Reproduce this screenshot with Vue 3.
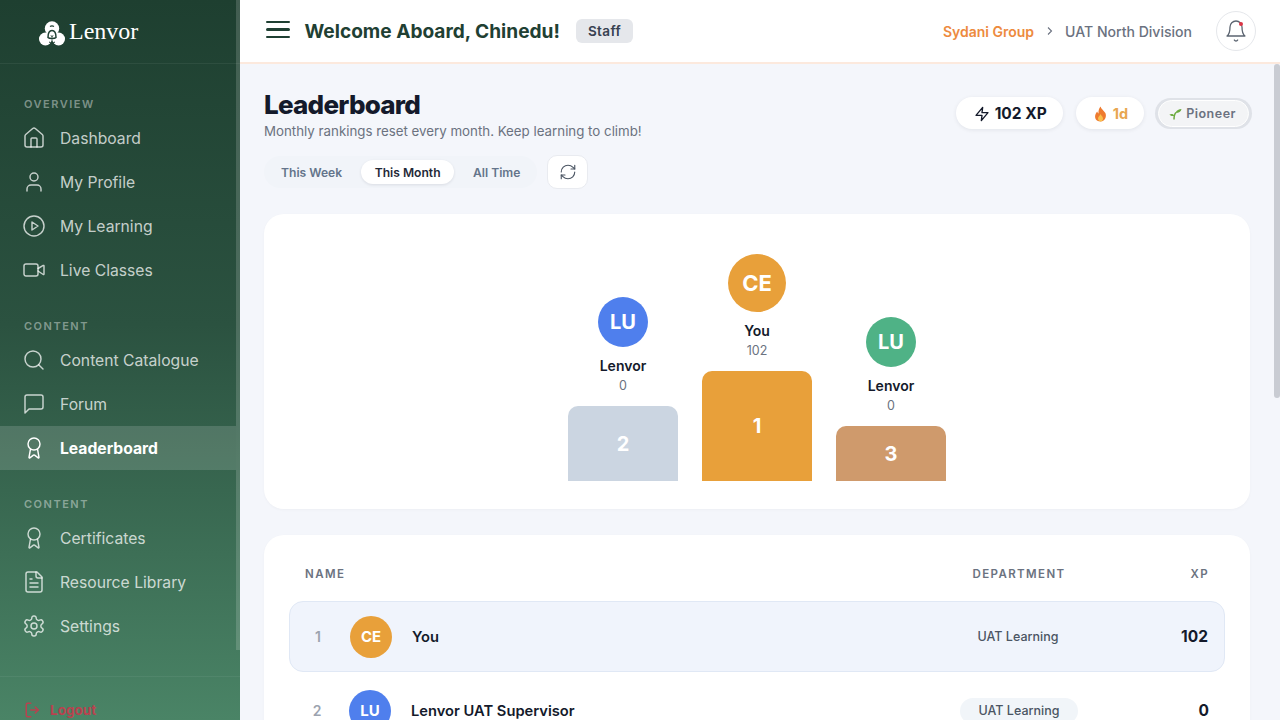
<template>
  <div class="app">
    <aside class="sidebar">
      <div class="brand">
        <svg class="brand-mark" width="26" height="25" viewBox="0 0 26 25">
          <circle cx="13" cy="7.5" r="7.2" fill="#fff" />
          <circle cx="6.4" cy="18" r="6.4" fill="#fff" />
          <circle cx="19.6" cy="18" r="6.4" fill="#fff" />
          <path d="M9 16.500c0-4 1.600-7 4-7s4 3 4 7c-1.200 1.400-6.800 1.400-8 0z" fill="none" stroke="#1f4033" stroke-width="1.500" />
          <path d="M11 5.500c1.200-.8 2.800-.8 4 0" fill="none" stroke="#1f4033" stroke-width="1.200" />
          <path d="M10 21c2 1.200 4 1.200 6 0" fill="none" stroke="#1f4033" stroke-width="1" />
        </svg>
        <span class="brand-name">Lenvor</span>
      </div>

      <nav class="nav">
        <div v-for="section in sections" :key="section.id" class="nav-section">
          <div class="nav-label">{{ section.label }}</div>
          <a
            v-for="item in section.items"
            :key="item.name"
            class="nav-item"
            :class="{ active: item.name === 'Leaderboard' }"
          >
            <svg class="nav-icon" viewBox="0 0 24 24">
              <path v-for="d in icons[item.icon]" :key="d" :d="d" />
            </svg>
            <span>{{ item.name }}</span>
          </a>
        </div>
      </nav>

      <div class="side-foot">
        <a class="logout">
          <svg class="logout-icon" viewBox="0 0 24 24">
            <path d="M9 21H5a2 2 0 0 1-2-2V5a2 2 0 0 1 2-2h4" />
            <path d="M15 8l4 4-4 4" />
            <path d="M19 12H9" />
          </svg>
          <span>Logout</span>
        </a>
      </div>
      <div class="side-thumb"></div>
    </aside>

    <div class="shell">
      <header class="topbar">
        <div class="top-left">
          <button class="burger"><span></span><span></span><span></span></button>
          <h1 class="welcome">Welcome Aboard, Chinedu!</h1>
          <span class="role">Staff</span>
        </div>
        <div class="top-right">
          <span class="org">Sydani Group</span>
          <svg class="crumb-sep" width="10" height="10" viewBox="0 0 10 10"><path d="M3 1.500 6.500 5 3 8.500" /></svg>
          <span class="division">UAT North Division</span>
          <button class="bell">
            <svg width="24" height="24" viewBox="0 0 24 24">
              <path d="M6 8a6 6 0 0 1 12 0c0 7 3 9 3 9H3s3-2 3-9" />
              <path d="M10.300 21a1.940 1.940 0 0 0 3.400 0" />
            </svg>
            <i class="bell-dot"></i>
          </button>
        </div>
      </header>

      <main class="page">
        <div class="page-head">
          <div>
            <h2 class="page-title">Leaderboard</h2>
            <p class="page-sub">Monthly rankings reset every month. Keep learning to climb!</p>
          </div>
          <div class="chips">
            <div class="chip chip-xp">
              <svg width="16" height="16" viewBox="0 0 24 24"><path d="M13 2 3 14h9l-1 8 10-12h-9l1-8z" /></svg>
              102 XP
            </div>
            <div class="chip chip-streak">
              <svg width="15" height="16" viewBox="0 0 16 18">
                <path d="M8 .5c.6 3 4 4.600 5.500 7.500 1.500 3.200.2 9.500-5.500 9.500S1 12.500 2.500 9c.6-1.300 1.300-2 1.800-2.800.3 1.200.8 1.900 1.500 2.300C5.400 5.500 6.300 2.500 8 .5z" fill="#ee7b2f" />
                <path d="M8 9c.4 1.500 2.800 2.600 2.800 5 0 2-1.300 3.300-2.800 3.300S5.200 16 5.200 14.200C5.200 12 7.400 11 8 9z" fill="#f9c04d" />
              </svg>
              1d
            </div>
            <div class="chip-ring">
              <div class="chip-level">
                <svg width="13" height="12" viewBox="0 0 13 12">
                  <path d="M5 11.500C5 8 5.500 6 7 4.500" fill="none" stroke="#6cab3f" stroke-width="1.500" />
                  <path d="M6.500 5C7.500 2 10 1 12.500 1 12 3.500 10 5 6.500 5z" fill="#6cab3f" />
                  <path d="M5.500 7.500C4.500 6 2.500 5.500.5 6.500 1.500 8 3.500 8.500 5.500 7.500z" fill="#6cab3f" />
                </svg>
                Pioneer
              </div>
            </div>
          </div>
        </div>

        <div class="filters">
          <div class="tabs">
            <button v-for="t in tabs" :key="t" class="tab" :class="{ on: t === 'This Month' }">{{ t }}</button>
          </div>
          <button class="refresh">
            <svg width="18" height="18" viewBox="0 0 24 24">
              <path d="M3 12a9 9 0 0 1 9-9 9.750 9.750 0 0 1 6.740 2.740L21 8" />
              <path d="M21 3v5h-5" />
              <path d="M21 12a9 9 0 0 1-9 9 9.750 9.750 0 0 1-6.740-2.740L3 16" />
              <path d="M8 16H3v5" />
            </svg>
          </button>
        </div>

        <section class="podium-card">
          <div class="podium">
            <div v-for="p in podium" :key="p.rank" class="podium-col">
              <div class="avatar" :class="p.big ? 'big' : ''" :style="{ background: p.color }">{{ p.initials }}</div>
              <div class="podium-name">{{ p.name }}</div>
              <div class="podium-xp">{{ p.xp }}</div>
              <div class="podium-bar" :style="{ height: p.height + 'px', background: p.barColor }">{{ p.rank }}</div>
            </div>
          </div>
        </section>

        <section class="table-card">
          <div class="table-head">
            <span class="th-name">Name</span>
            <span class="th-dept">Department</span>
            <span class="th-xp">XP</span>
          </div>
          <div v-for="row in rows" :key="row.rank" class="row" :class="{ me: row.me }">
            <span class="row-rank">{{ row.rank }}</span>
            <span class="row-avatar" :style="{ background: row.color }">{{ row.initials }}</span>
            <span class="row-name">{{ row.name }}</span>
            <span class="row-dept"><span class="dept-pill">{{ row.dept }}</span></span>
            <span class="row-xp">{{ row.xp }}</span>
          </div>
        </section>
      </main>
      <div class="page-thumb"></div>
    </div>
  </div>
</template>

<script setup>
const icons = {
  home: [
    'M15 21v-8a1 1 0 0 0-1-1h-4a1 1 0 0 0-1 1v8',
    'M3 10a2 2 0 0 1 .709-1.528l7-5.999a2 2 0 0 1 2.582 0l7 5.999A2 2 0 0 1 21 10v9a2 2 0 0 1-2 2H5a2 2 0 0 1-2-2z',
  ],
  user: [
    'M19 21v-2a4 4 0 0 0-4-4H9a4 4 0 0 0-4 4v2',
    'M16 7a4 4 0 1 1-8 0a4 4 0 1 1 8 0',
  ],
  play: [
    'M22 12a10 10 0 1 1-20 0a10 10 0 1 1 20 0',
    'M10 8l6 4-6 4z',
  ],
  video: [
    'M16 13l5.223 3.482a.5.5 0 0 0 .777-.416V7.870a.5.5 0 0 0-.752-.432L16 10.500',
    'M4 6h10a2 2 0 0 1 2 2v8a2 2 0 0 1-2 2H4a2 2 0 0 1-2-2V8a2 2 0 0 1 2-2z',
  ],
  search: [
    'm21 21-4.340-4.340',
    'M19 11a8 8 0 1 1-16 0a8 8 0 1 1 16 0',
  ],
  chat: ['M21 15a2 2 0 0 1-2 2H7l-4 4V5a2 2 0 0 1 2-2h14a2 2 0 0 1 2 2z'],
  award: [
    'm15.477 12.890 1.515 8.526a.5.5 0 0 1-.810.470l-3.580-2.687a1 1 0 0 0-1.197 0l-3.586 2.686a.5.5 0 0 1-.810-.469l1.514-8.526',
    'M18 8a6 6 0 1 1-12 0a6 6 0 1 1 12 0',
  ],
  file: [
    'M15 2H6a2 2 0 0 0-2 2v16a2 2 0 0 0 2 2h12a2 2 0 0 0 2-2V7Z',
    'M14 2v4a2 2 0 0 0 2 2h4',
    'M10 9H8',
    'M16 13H8',
    'M16 17H8',
  ],
  gear: [
    'M12.220 2h-.440a2 2 0 0 0-2 2v.180a2 2 0 0 1-1 1.730l-.430.250a2 2 0 0 1-2 0l-.150-.080a2 2 0 0 0-2.730.730l-.220.380a2 2 0 0 0 .730 2.730l.150.100a2 2 0 0 1 1 1.720v.510a2 2 0 0 1-1 1.740l-.150.090a2 2 0 0 0-.730 2.730l.220.380a2 2 0 0 0 2.730.730l.150-.080a2 2 0 0 1 2 0l.430.250a2 2 0 0 1 1 1.730V20a2 2 0 0 0 2 2h.440a2 2 0 0 0 2-2v-.180a2 2 0 0 1 1-1.730l.430-.250a2 2 0 0 1 2 0l.150.080a2 2 0 0 0 2.730-.730l.220-.390a2 2 0 0 0-.730-2.730l-.150-.080a2 2 0 0 1-1-1.740v-.500a2 2 0 0 1 1-1.740l.150-.090a2 2 0 0 0 .730-2.730l-.220-.380a2 2 0 0 0-2.730-.730l-.150.080a2 2 0 0 1-2 0l-.430-.250a2 2 0 0 1-1-1.730V4a2 2 0 0 0-2-2z',
    'M15 12a3 3 0 1 1-6 0a3 3 0 1 1 6 0',
  ],
}

const sections = [
  {
    id: 'overview',
    label: 'Overview',
    items: [
      { name: 'Dashboard', icon: 'home' },
      { name: 'My Profile', icon: 'user' },
      { name: 'My Learning', icon: 'play' },
      { name: 'Live Classes', icon: 'video' },
    ],
  },
  {
    id: 'content',
    label: 'Content',
    items: [
      { name: 'Content Catalogue', icon: 'search' },
      { name: 'Forum', icon: 'chat' },
      { name: 'Leaderboard', icon: 'award' },
    ],
  },
  {
    id: 'content2',
    label: 'Content',
    items: [
      { name: 'Certificates', icon: 'award' },
      { name: 'Resource Library', icon: 'file' },
      { name: 'Settings', icon: 'gear' },
    ],
  },
]

const tabs = ['This Week', 'This Month', 'All Time']

const podium = [
  { rank: 2, initials: 'LU', name: 'Lenvor', xp: 0, color: '#4f7fed', barColor: '#cbd5e1', height: 75 },
  { rank: 1, initials: 'CE', name: 'You', xp: 102, color: '#e8a03a', barColor: '#e8a03a', height: 110, big: true },
  { rank: 3, initials: 'LU', name: 'Lenvor', xp: 0, color: '#4fb286', barColor: '#cf9a6c', height: 55 },
]

const rows = [
  { rank: 1, initials: 'CE', name: 'You', dept: 'UAT Learning', xp: 102, color: '#e8a03a', me: true },
  { rank: 2, initials: 'LU', name: 'Lenvor UAT Supervisor', dept: 'UAT Learning', xp: 0, color: '#4f7fed' },
]
</script>

<style>
html,
body {
  margin: 0;
  overflow: hidden;
}
</style>

<style scoped>
.app {
  display: flex;
  height: 720px;
  font-family: Inter, "Noto Sans", sans-serif;
  color: #111827;
  background: #f4f6fb;
}

button {
  font-family: inherit;
  border: none;
  background: none;
  padding: 0;
}

/* Sidebar */
.sidebar {
  position: relative;
  width: 240px;
  flex-shrink: 0;
  height: 720px;
  box-sizing: border-box;
  overflow: hidden;
  background: linear-gradient(180deg, #1e3f30 0%, #2b5240 45%, #4a8466 100%);
}

.side-thumb {
  position: absolute;
  top: 0;
  right: 0;
  width: 4px;
  height: 650px;
  background: rgba(255, 255, 255, 0.16);
}

.brand {
  height: 63px;
  display: flex;
  align-items: center;
  padding-left: 39px;
  gap: 4px;
  border-bottom: 1px solid rgba(255, 255, 255, 0.06);
}

.brand-mark {
  margin-top: 3px;
}

.brand-name {
  font-family: "Liberation Serif", serif;
  font-size: 24px;
  color: #fff;
}

.nav {
  padding-top: 32px;
}

.nav-section {
  margin-bottom: 26px;
}

.nav-section:last-child {
  margin-bottom: 0;
}

.nav-label {
  padding-left: 24px;
  font-size: 11px;
  line-height: 16px;
  font-weight: 600;
  letter-spacing: 1.5px;
  text-transform: uppercase;
  color: rgba(255, 255, 255, 0.42);
  margin-bottom: 4px;
}

.nav-item {
  height: 44px;
  display: flex;
  align-items: center;
  gap: 14px;
  padding-left: 22px;
  margin-right: 4px;
  font-size: 15.7px;
  font-weight: 400;
  color: rgba(255, 255, 255, 0.74);
}

.nav-item.active {
  background: rgba(255, 255, 255, 0.15);
  color: #fff;
  font-weight: 700;
}

.nav-icon {
  width: 24px;
  height: 24px;
  fill: none;
  stroke: currentColor;
  stroke-width: 1.45;
  stroke-linecap: round;
  stroke-linejoin: round;
}

.side-foot {
  margin-top: 28px;
  border-top: 1px solid rgba(255, 255, 255, 0.06);
  padding: 11px 0 0 24px;
}

.logout {
  height: 44px;
  display: flex;
  align-items: center;
  gap: 8px;
  font-size: 13.5px;
  font-weight: 700;
  color: #b8424f;
}

.logout-icon {
  width: 18px;
  height: 18px;
  fill: none;
  stroke: currentColor;
  stroke-width: 2;
  stroke-linecap: round;
  stroke-linejoin: round;
}

/* Top bar */
.shell {
  position: relative;
  flex: 1;
  min-width: 0;
  display: flex;
  flex-direction: column;
  height: 720px;
}

.page-thumb {
  position: absolute;
  top: 64px;
  right: 0;
  width: 6px;
  height: 334px;
  border-radius: 3px;
  background: #c9ccd3;
}

.topbar {
  height: 62px;
  flex-shrink: 0;
  background: #fff;
  border-bottom: 2px solid #fce9dd;
  display: flex;
  align-items: center;
  justify-content: space-between;
  padding: 0 24px 0 26px;
}

.top-left,
.top-right {
  display: flex;
  align-items: center;
}

.burger {
  width: 24px;
  display: flex;
  flex-direction: column;
  gap: 5px;
  margin-top: -3px;
}

.burger span {
  height: 2.5px;
  border-radius: 2px;
  background: #1f4033;
}

.welcome {
  margin: 0 0 0 14.500px;
  font-size: 19.1px;
  font-weight: 700;
  color: #1f4033;
}

.role {
  margin-left: 16px;
  height: 24px;
  line-height: 24px;
  padding: 0 12px;
  border-radius: 6px;
  background: #e5e7eb;
  font-size: 13.5px;
  font-weight: 600;
  letter-spacing: 0.4px;
  color: #374151;
}

.org {
  font-size: 14px;
  font-weight: 600;
  color: #ed8a3e;
}

.crumb-sep {
  margin: 0 10.500px;
  fill: none;
  stroke: #6b7280;
  stroke-width: 1.1;
}

.division {
  font-size: 14.05px;
  font-weight: 500;
  color: #6b7280;
}

.bell {
  position: relative;
  margin-left: 24px;
  width: 40px;
  height: 40px;
  box-sizing: border-box;
  border: 1px solid #e5e7eb;
  border-radius: 50%;
  background: #fff;
  display: flex;
  align-items: center;
  justify-content: center;
}

.bell svg {
  fill: none;
  stroke: #5b6470;
  stroke-width: 1.3;
  stroke-linecap: round;
  stroke-linejoin: round;
}

.bell-dot {
  position: absolute;
  top: 10px;
  right: 12px;
  width: 4px;
  height: 4px;
  border-radius: 50%;
  background: #dc3545;
}

/* Page */
.page {
  flex: 1;
  min-height: 0;
  overflow: hidden;
  padding: 24px 30px 24px 24px;
}

.page-head {
  display: flex;
  justify-content: space-between;
  align-items: flex-start;
}

.page-title {
  margin: 0;
  font-size: 26px;
  line-height: 34px;
  font-weight: 800;
  letter-spacing: -0.75px;
  color: #141a2b;
}

.page-sub {
  margin: -1px 0 1px;
  font-size: 13.3px;
  line-height: 20px;
  color: #6b7280;
}

.chips {
  display: flex;
  align-items: center;
  gap: 13px;
  margin: 9px -2px 0 0;
}

.chip {
  height: 32px;
  box-sizing: border-box;
  padding-top: 1px;
  display: flex;
  align-items: center;
  border-radius: 16px;
  background: #fff;
  box-shadow: 0 1px 4px rgba(15, 23, 42, 0.08);
  font-weight: 700;
}

.chip-xp {
  padding-left: 18px;
  padding-right: 16px;
  gap: 5px;
  font-size: 15.5px;
  color: #141a2b;
}

.chip-xp svg {
  fill: none;
  stroke: #141a2b;
  stroke-width: 2;
  stroke-linejoin: round;
}

.chip-streak {
  padding-left: 17px;
  padding-right: 16px;
  gap: 5px;
  font-size: 14.5px;
  color: #e8a650;
}

.chip-ring {
  margin-left: -2px;
  padding: 3px;
  border-radius: 18px;
  background: #dfe2e8;
}

.chip-level {
  height: 24px;
  padding: 1px 12px 0 10px;
  box-sizing: content-box;
  display: flex;
  align-items: center;
  gap: 4px;
  border-radius: 14px;
  background: #f3f4f6;
  border: 1px solid #fff;
  margin: -1px 0;
  font-size: 12.5px;
  font-weight: 600;
  letter-spacing: 0.5px;
  color: #6b7280;
}

.filters {
  display: flex;
  align-items: center;
  gap: 10px;
  margin-top: 13px;
}

.tabs {
  display: flex;
  align-items: center;
  gap: 3px;
  height: 32px;
  padding: 0 1px;
  border-radius: 16px;
  background: #f1f4f9;
}

.tab {
  height: 24px;
  padding: 0 16px;
  border-radius: 12px;
  font-size: 12.1px;
  font-weight: 600;
  color: #64748b;
}

.tab.on {
  padding: 0 13.500px;
  background: #fff;
  color: #1f2937;
  box-shadow: 0 1px 3px rgba(15, 23, 42, 0.1);
}

.refresh {
  width: 41px;
  height: 34px;
  box-sizing: border-box;
  border: 1px solid #e9ebf0;
  border-radius: 10px;
  background: #fff;
  display: flex;
  align-items: center;
  justify-content: center;
}

.refresh svg {
  fill: none;
  stroke: #4b5563;
  stroke-width: 1.5;
  stroke-linecap: round;
  stroke-linejoin: round;
}

/* Podium */
.podium-card {
  margin-top: 25px;
  height: 295px;
  box-sizing: border-box;
  padding-bottom: 28px;
  background: #fff;
  border-radius: 20px;
  box-shadow: 0 1px 3px rgba(15, 23, 42, 0.03);
  display: flex;
  align-items: flex-end;
  justify-content: center;
}

.podium {
  display: flex;
  align-items: flex-end;
  gap: 24px;
}

.podium-col {
  width: 110px;
  display: flex;
  flex-direction: column;
  align-items: center;
}

.avatar {
  width: 50px;
  height: 50px;
  border-radius: 50%;
  display: flex;
  align-items: center;
  justify-content: center;
  color: #fff;
  font-size: 20px;
  font-weight: 700;
}

.avatar.big {
  width: 58px;
  height: 58px;
  font-size: 22px;
}

.podium-name {
  margin-top: 9px;
  font-size: 14px;
  line-height: 20px;
  font-weight: 600;
  color: #141a2b;
}

.podium-xp {
  font-size: 12.5px;
  line-height: 20px;
  color: #6b7280;
  margin-bottom: 10px;
}

.podium-bar {
  width: 100%;
  border-radius: 10px 10px 0 0;
  display: flex;
  align-items: center;
  justify-content: center;
  color: #fff;
  font-size: 20px;
  font-weight: 700;
}

/* Table */
.table-card {
  margin-top: 26px;
  box-sizing: border-box;
  padding: 25px;
  background: #fff;
  border-radius: 20px;
  box-shadow: 0 1px 3px rgba(15, 23, 42, 0.03);
}

.table-head {
  display: flex;
  align-items: center;
  height: 28px;
  padding: 0 16px;
  margin-bottom: 13px;
  font-size: 11.5px;
  font-weight: 600;
  letter-spacing: 1.4px;
  text-transform: uppercase;
  color: #6b7280;
}

.th-name {
  flex: 1;
}

.th-dept {
  width: 160px;
  text-align: center;
}

.th-xp {
  width: 110px;
  text-align: right;
}

.row {
  display: flex;
  align-items: center;
  height: 71px;
  padding: 0 16px;
  box-sizing: border-box;
  margin-bottom: 3px;
}

.row.me {
  background: #f0f4fc;
  border: 1px solid #e0e8f5;
  border-radius: 14px;
}

.row-rank {
  width: 24px;
  text-align: center;
  font-size: 14px;
  font-weight: 600;
  color: #9ca3af;
}

.row-avatar {
  margin-left: 20px;
  width: 42px;
  height: 42px;
  border-radius: 50%;
  display: flex;
  align-items: center;
  justify-content: center;
  color: #fff;
  font-size: 15px;
  font-weight: 700;
}

.row-name {
  flex: 1;
  margin-left: 20px;
  font-size: 14.7px;
  font-weight: 600;
  color: #141a2b;
}

.row-dept {
  width: 160px;
  display: flex;
  justify-content: center;
}

.dept-pill {
  padding: 4px 19px;
  border-radius: 13px;
  background: #f1f5f9;
  font-size: 12.5px;
  line-height: 18px;
  font-weight: 500;
  color: #4b5563;
}

.me .dept-pill {
  background: transparent;
}

.row-xp {
  width: 110px;
  text-align: right;
  font-size: 15.5px;
  font-weight: 700;
  color: #141a2b;
}
</style>
